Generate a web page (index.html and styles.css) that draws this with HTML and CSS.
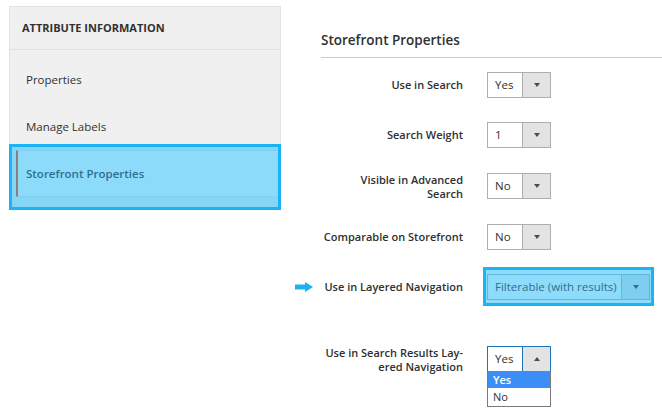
FILE: index.html
```html
<!DOCTYPE html>
<html lang="en">
<head>
    <meta charset="UTF-8">
    <meta name="viewport" content="width=device-width, initial-scale=1.0">
    <title>Storefront Properties</title>
    <link rel="stylesheet" href="styles.css">
</head>
<body>
    <div class="page">
        <aside class="sidebar">
            <div class="sidebar-title">Attribute Information</div>
            <div class="callout sidebar-callout"></div>
            <ul class="sidebar-nav">
                <li class="nav-item">Properties</li>
                <li class="nav-item">Manage Labels</li>
                <li class="nav-item active">Storefront Properties</li>
            </ul>
        </aside>

        <main class="content">
            <h2 class="section-title">Storefront Properties</h2>

            <div class="fields">
                <div class="field">
                    <label class="field-label">Use in Search</label>
                    <div class="select">
                        <span class="select-value">Yes</span>
                        <span class="select-btn"><i class="caret"></i></span>
                    </div>
                </div>

                <div class="field">
                    <label class="field-label">Search Weight</label>
                    <div class="select">
                        <span class="select-value">1</span>
                        <span class="select-btn"><i class="caret"></i></span>
                    </div>
                </div>

                <div class="field field-tall">
                    <label class="field-label">Visible in Advanced<br>Search</label>
                    <div class="select">
                        <span class="select-value">No</span>
                        <span class="select-btn"><i class="caret"></i></span>
                    </div>
                </div>

                <div class="field">
                    <label class="field-label">Comparable on Storefront</label>
                    <div class="select">
                        <span class="select-value">No</span>
                        <span class="select-btn"><i class="caret"></i></span>
                    </div>
                </div>

                <div class="field field-marked">
                    <svg class="pointer" width="18" height="10" viewBox="0 0 18 10">
                        <path d="M0 2.5h10V0l8 5-8 5V7.5H0z" fill="#1ab3f2"/>
                    </svg>
                    <label class="field-label">Use in Layered Navigation</label>
                    <div class="select-wrap">
                        <div class="callout select-callout"></div>
                        <div class="select select-wide select-lit">
                            <span class="select-value">Filterable (with results)</span>
                            <span class="select-btn"><i class="caret"></i></span>
                        </div>
                    </div>
                </div>

                <div class="field field-tall">
                    <label class="field-label">Use in Search Results Lay-<br>ered Navigation</label>
                    <div class="select-wrap">
                        <div class="select select-open">
                            <span class="select-value">Yes</span>
                            <span class="select-btn"><i class="caret caret-up"></i></span>
                        </div>
                        <ul class="options">
                            <li class="option selected">Yes</li>
                            <li class="option">No</li>
                        </ul>
                    </div>
                </div>
            </div>
        </main>
    </div>
</body>
</html>
```

FILE: styles.css
```css
* {
    box-sizing: border-box;
}

html, body {
    height: 100%;
}

body {
    margin: 0;
    font-family: "Open Sans", Arial, sans-serif;
    background-color: #FFFFFF;
    color: #303030;
}

.page {
    display: flex;
    align-items: flex-start;
    padding: 6px 0 0 9px;
}

/* left tabs */
.sidebar {
    position: relative;
    width: 272px;
    flex-shrink: 0;
    background-color: #F0F0F0;
    border: 1px solid #E3E3E3;
}

.sidebar-title {
    height: 43px;
    line-height: 42px;
    padding-left: 12px;
    font-size: 11px;
    font-weight: 700;
    text-transform: uppercase;
    border-bottom: 1px solid #E0E0E0;
}

.sidebar-nav {
    list-style: none;
    margin: 0;
    padding: 6px 0 10px;
}

.nav-item {
    position: relative;
    height: 47px;
    line-height: 47px;
    padding-left: 16px;
    font-size: 11.5px;
}

.nav-item.active {
    margin: 0 3px 0 6px;
    padding-left: 8px;
    line-height: 45px;
    font-weight: 600;
    color: #2C7090;
    background-color: #8DDBFB;
    border-top: 1px solid #7FD0F2;
    border-bottom: 1px solid #7FD0F2;
    border-left: 2px solid #8A807B;
}

/* blue highlight frames */
.callout {
    position: absolute;
    border: 3px solid #1AB4F4;
    background-color: #85D5F5;
}

.sidebar-callout {
    left: -1px;
    right: -1px;
    top: 137px;
    height: 66px;
}

/* right column */
.content {
    flex: 1;
    margin-left: 40px;
}

.section-title {
    margin: 24px 0 0;
    padding-bottom: 7px;
    font-size: 13.5px;
    font-weight: 600;
    line-height: 20px;
    border-bottom: 1px solid #CCCCCC;
}

.fields {
    padding-top: 14px;
}

.field {
    position: relative;
    display: flex;
    align-items: center;
    min-height: 26px;
    margin-bottom: 24px;
}

.field-marked {
    margin-bottom: 45px;
}

.field-label {
    width: 142px;
    margin-right: 24px;
    text-align: right;
    font-size: 11px;
    font-weight: 600;
    line-height: 14px;
}

.field-tall .field-label {
    position: relative;
    top: 1px;
}

.pointer {
    position: absolute;
    left: -26px;
    top: 8px;
}

/* select boxes */
.select-wrap {
    position: relative;
}

.select {
    position: relative;
    display: flex;
    width: 64px;
    height: 26px;
    border: 1px solid #ADADAD;
    background-color: #FFFFFF;
    font-size: 11.5px;
}

.select-value {
    flex: 1;
    padding-left: 7px;
    line-height: 23px;
    white-space: nowrap;
}

.select-btn {
    width: 28px;
    display: flex;
    align-items: center;
    justify-content: center;
    background-color: #E3E3E3;
    border-left: 1px solid #ADADAD;
}

.caret {
    width: 0;
    height: 0;
    border-left: 3.5px solid transparent;
    border-right: 3.5px solid transparent;
    border-top: 4px solid #514943;
}

.caret-up {
    border-top: 0;
    border-bottom: 4px solid #514943;
}

.select-wide {
    width: 163px;
}

.select-lit {
    background-color: #8EDCFB;
    border-color: #5FB7DC;
    color: #2F6F8C;
}

.select-lit .select-btn {
    background-color: #7ECEF0;
    border-left-color: #5FB7DC;
}

.select-lit .caret {
    border-top-color: #3D6A80;
}

.select-callout {
    left: -4px;
    right: -4px;
    top: -7px;
    bottom: -6px;
    background-color: #8EDCFB;
}

.select-open,
.select-open .select-btn {
    border-color: #1C75B9;
}

.options {
    position: absolute;
    top: 25px;
    left: 0;
    width: 64px;
    margin: 0;
    padding: 0;
    list-style: none;
    border: 1px solid #7A7A7A;
    border-top: 0;
    background-color: #FFFFFF;
    font-size: 11px;
}

.option {
    height: 18px;
    line-height: 18px;
    padding-left: 5px;
}

.option.selected {
    height: 17px;
    line-height: 17px;
    background-color: #3B8EF5;
    color: #FFFFFF;
    font-weight: 600;
}
```
